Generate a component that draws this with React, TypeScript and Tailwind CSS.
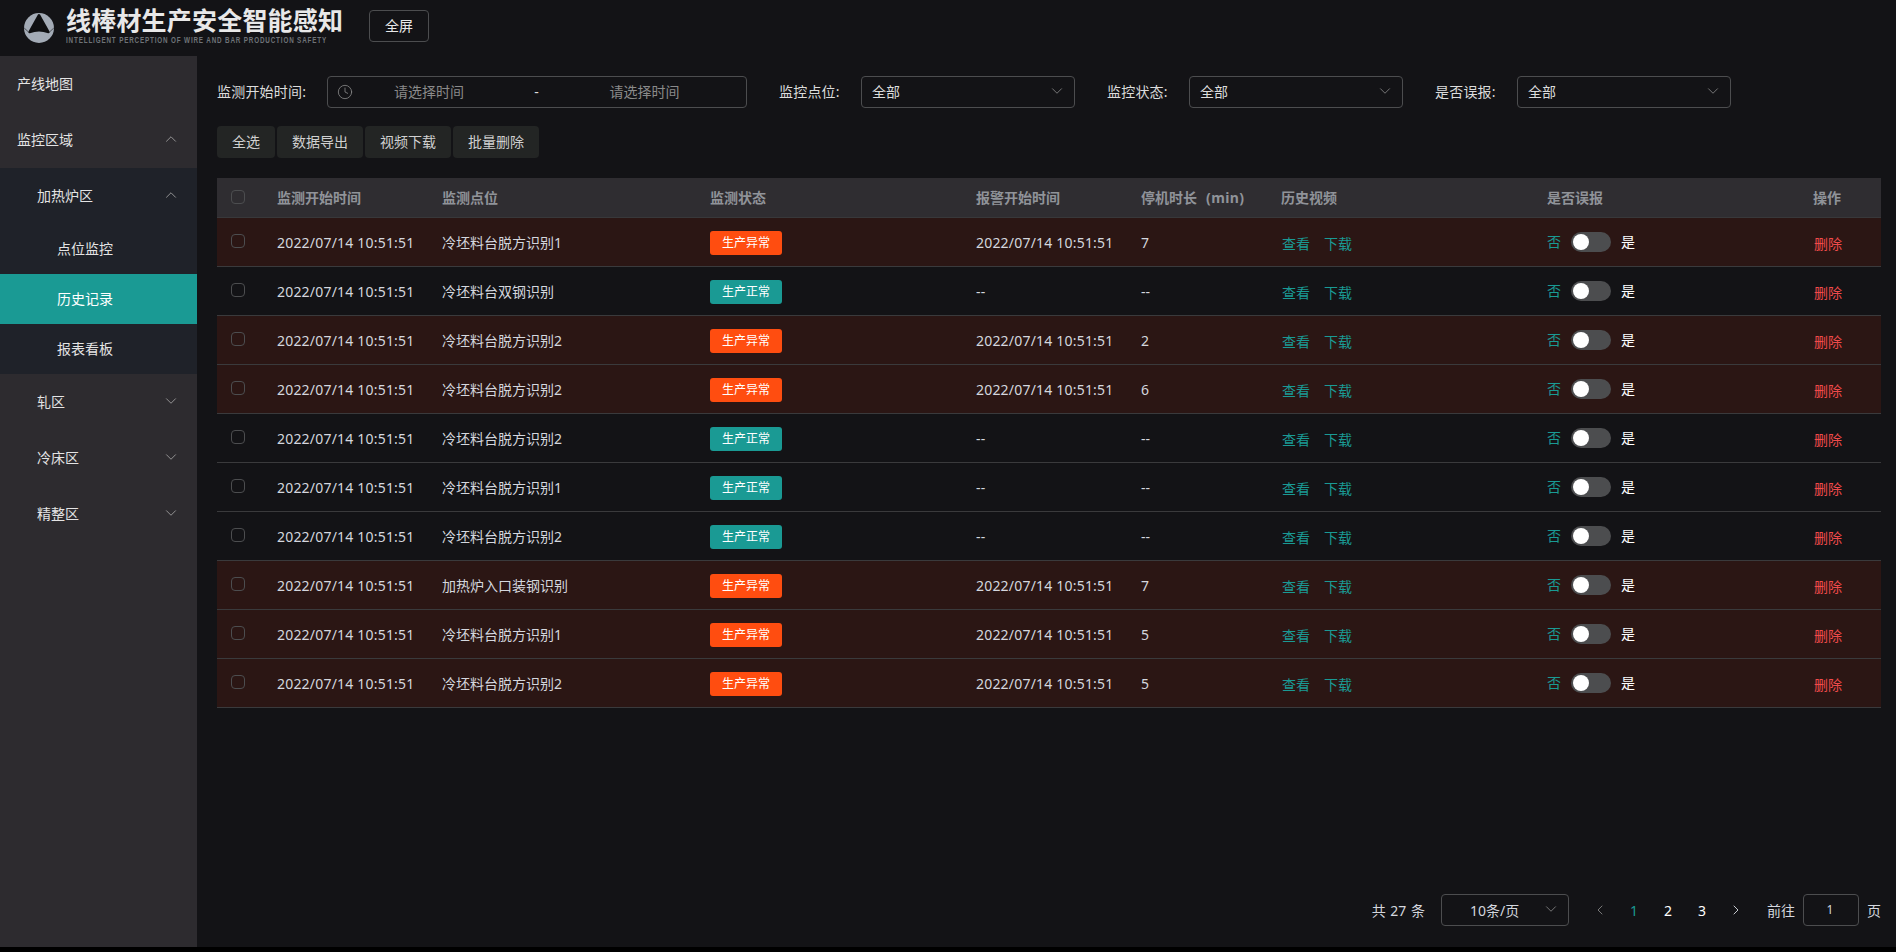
import { ChevronDown, ChevronLeft, ChevronRight, ChevronUp, Clock } from "lucide-react";

const FONT = "[font-family:'Noto_Sans','Noto_Sans_CJK_SC',sans-serif]";
const GRID =
  "grid grid-cols-[60px_165px_268px_266px_164px_141px_265px_266px_69px] items-center";

const ROWS = [
  { point: "冷坯料台脱方识别1", bad: true, stop: "7" },
  { point: "冷坯料台双钢识别", bad: false, stop: "--" },
  { point: "冷坯料台脱方识别2", bad: true, stop: "2" },
  { point: "冷坯料台脱方识别2", bad: true, stop: "6" },
  { point: "冷坯料台脱方识别2", bad: false, stop: "--" },
  { point: "冷坯料台脱方识别1", bad: false, stop: "--" },
  { point: "冷坯料台脱方识别2", bad: false, stop: "--" },
  { point: "加热炉入口装钢识别", bad: true, stop: "7" },
  { point: "冷坯料台脱方识别1", bad: true, stop: "5" },
  { point: "冷坯料台脱方识别2", bad: true, stop: "5" },
];

const TIME = "2022/07/14 10:51:51";

function Logo() {
  return (
    <svg width="32" height="32" viewBox="0 0 32 32" className="shrink-0">
      <circle cx="16" cy="16" r="15" fill="#a3abb6" />
      <path d="M16 3.2 L25.5 20 Q16 16.5 6.5 20 Z" fill="#0f1012" stroke="#0f1012" strokeWidth="2.4" strokeLinejoin="round" />
      <path d="M5.5 20 L1.2 16 M26.5 20 L30.8 16" stroke="#33363b" strokeWidth="0.8" />
    </svg>
  );
}

function MenuItem({ label, indent, open }: { label: string; indent: string; open: boolean }) {
  return (
    <div className={`h-14 pb-[2px] flex items-center justify-between pr-[17px] ${indent}`}>
      <span>{label}</span>
      {open ? (
        <ChevronUp className="w-[18px] h-[18px] text-[#a8a8a8]" strokeWidth={1.1} />
      ) : (
        <ChevronDown className="w-[18px] h-[18px] text-[#a8a8a8]" strokeWidth={1.1} />
      )}
    </div>
  );
}

function Select({ label, labelWidth, margin }: { label: string; labelWidth: string; margin: string }) {
  return (
    <div className={`flex items-center ${margin}`}>
      <span className={`${labelWidth} pb-[2px] tracking-[0.2px] text-[#dcdcdc]`}>{label}</span>
      <div className="w-[214px] h-8 border border-[#4c4d4f] rounded flex items-center justify-between pb-[2px] pl-[10px] pr-[8px] text-[#dcdcdc]">
        <span>全部</span>
        <ChevronDown className="w-[18px] h-[18px] text-[#8b8b8b]" strokeWidth={1.1} />
      </div>
    </div>
  );
}

function Checkbox() {
  return <div className="w-[14px] h-[14px] ml-[14px] mb-[2px] border border-[#4c4d4f] rounded-sm" />;
}

export default function App() {
  return (
    <div className={`w-[1896px] h-[952px] bg-black overflow-hidden text-[14px] ${FONT}`}>
      <div className="h-[947px] bg-[#131316] flex flex-col">
        {/* Header */}
        <div className="h-14 shrink-0 flex items-center pl-[23px]">
          <Logo />
          <div className="ml-[11px] w-[276px] flex flex-col mb-[6px]">
            <span className="text-[25px] leading-[30px] font-bold tracking-[0.2px] text-[#e8e8e8] whitespace-nowrap">
              线棒材生产安全智能感知
            </span>
            <span className="text-[9px] leading-[9px] mt-[1px] font-bold tracking-[1.2px] text-[#6f7378] whitespace-nowrap origin-left scale-x-[0.7] [font-family:'Liberation_Sans',sans-serif]">
              INTELLIGENT PERCEPTION OF WIRE AND BAR PRODUCTION SAFETY
            </span>
          </div>
          <div className="ml-[27px] mb-[4px] w-[60px] h-8 pb-[2px] border border-[#4c4d4f] rounded flex items-center justify-center text-[#e8e8e8]">
            全屏
          </div>
        </div>

        <div className="flex-1 flex min-h-0">
          {/* Sidebar */}
          <div className="w-[197px] shrink-0 bg-[#2d2b2f] text-[#e4e4e4]">
            <div className="h-14 pb-[2px] flex items-center pl-[17px]">产线地图</div>
            <MenuItem label="监控区域" indent="pl-[17px]" open />
            <div className="bg-[#1f2229]">
              <MenuItem label="加热炉区" indent="pl-[37px]" open />
              <div className="h-[50px] pb-[2px] flex items-center pl-[57px]">点位监控</div>
              <div className="h-[50px] pb-[2px] flex items-center pl-[57px] bg-[#1a9a94] text-white">历史记录</div>
              <div className="h-[50px] pb-[2px] flex items-center pl-[57px]">报表看板</div>
            </div>
            <MenuItem label="轧区" indent="pl-[37px]" open={false} />
            <MenuItem label="冷床区" indent="pl-[37px]" open={false} />
            <MenuItem label="精整区" indent="pl-[37px]" open={false} />
          </div>

          {/* Main */}
          <div className="flex-1 min-w-0 pl-[20px] pr-[15px] pt-5 flex flex-col">
            <div className="flex items-center h-8">
              <span className="w-[110px] pb-[2px] tracking-[0.2px] text-[#dcdcdc]">监测开始时间:</span>
              <div className="w-[420px] h-8 pb-[2px] border border-[#4c4d4f] rounded grid grid-cols-[190px_30px_1fr] items-center relative text-[#8a8a8a]">
                <Clock className="absolute left-[9px] top-[7px] w-4 h-4 text-[#8b8b8b]" strokeWidth={1.2} />
                <span className="text-center pl-[12px]">请选择时间</span>
                <span className="text-center pl-[7px] text-[#dcdcdc]">-</span>
                <span className="text-center pr-[5px]">请选择时间</span>
              </div>
              <Select label="监控点位:" labelWidth="w-[82px]" margin="ml-8" />
              <Select label="监控状态:" labelWidth="w-[82px]" margin="ml-8" />
              <Select label="是否误报:" labelWidth="w-[82px]" margin="ml-8" />
            </div>

            <div className="flex gap-[2px] mt-[18px] text-[#d0d0d0]">
              {["全选", "数据导出", "视频下载", "批量删除"].map((b) => (
                <div key={b} className="h-8 px-[15px] pb-[2px] flex items-center bg-[#232524] rounded">
                  {b}
                </div>
              ))}
            </div>

            {/* Table */}
            <div className="mt-5">
              <div className={`${GRID} h-10 bg-[#2f2d31] border-b border-[#38383a] font-bold text-[#909399]`}>
                <Checkbox />
                <span>监测开始时间</span>
                <span>监测点位</span>
                <span>监测状态</span>
                <span>报警开始时间</span>
                <span className="pl-[1px] whitespace-nowrap">
                  停机时长<span className="ml-[9px] tracking-[0.4px]">(min)</span>
                </span>
                <span>历史视频</span>
                <span className="pl-[1px]">是否误报</span>
                <span className="pl-[1px]">操作</span>
              </div>
              {ROWS.map((row, i) => (
                <div
                  key={i}
                  className={`${GRID} h-[49px] border-b border-[#3a3a3c] text-[#d4d7de] ${
                    row.bad ? "bg-[#2b1614]" : ""
                  }`}
                >
                  <Checkbox />
                  <span className="tracking-[0.2px] whitespace-nowrap">{TIME}</span>
                  <span>{row.point}</span>
                  <span className="flex pt-[2px]">
                    <span
                      className={`inline-flex w-[72px] h-6 items-center justify-center rounded-[3px] text-[12px] text-white ${
                        row.bad ? "bg-[#ff4d10]" : "bg-[#1a9a94]"
                      }`}
                    >
                      {row.bad ? "生产异常" : "生产正常"}
                    </span>
                  </span>
                  <span className="tracking-[0.2px] whitespace-nowrap">{row.bad ? TIME : "--"}</span>
                  <span className="pl-[1px]">{row.stop}</span>
                  <span className="flex gap-[14px] pl-[1px] pt-[2px] text-[#1a9a94]">
                    <span>查看</span>
                    <span>下载</span>
                  </span>
                  <span className="flex items-center">
                    <span className="w-[25px] pl-[1px] pb-[2px] text-[#1a9a94]">否</span>
                    <span className="w-10 h-5 rounded-full bg-[#4c4d4f] flex items-center pl-[2px]">
                      <span className="w-4 h-4 rounded-full bg-white" />
                    </span>
                    <span className="ml-[10px] pb-[2px] text-white">是</span>
                  </span>
                  <span className="pl-[2px] pt-[2px] text-[#f04b4b]">删除</span>
                </div>
              ))}
            </div>

            {/* Pagination */}
            <div className="mt-auto mb-[21px] flex items-center justify-end h-8 text-[#d4d7de]">
              <span className="[word-spacing:1px]">共 27 条</span>
              <div className="ml-4 w-[128px] h-8 border border-[#4c4d4f] rounded flex items-center justify-between pl-[28px] pr-[8px]">
                <span>10条/页</span>
                <ChevronDown className="w-[18px] h-[18px] mb-[2px] text-[#8b8b8b]" strokeWidth={1.1} />
              </div>
              <div className="ml-[14px] w-[34px] flex justify-center">
                <ChevronLeft className="w-4 h-4 text-[#808080]" strokeWidth={1.4} />
              </div>
              <span className="w-[34px] text-center text-[#1a9a94]">1</span>
              <span className="w-[34px] text-center text-white">2</span>
              <span className="w-[34px] text-center text-white">3</span>
              <div className="w-[34px] flex justify-center">
                <ChevronRight className="w-4 h-4 text-[#d4d7de]" strokeWidth={1.4} />
              </div>
              <span className="ml-[14px]">前往</span>
              <div className="ml-2 w-[56px] h-8 border border-[#4c4d4f] rounded flex items-center justify-center text-[12px] pr-[2px]">
                1
              </div>
              <span className="ml-2">页</span>
            </div>
          </div>
        </div>
      </div>
    </div>
  );
}
